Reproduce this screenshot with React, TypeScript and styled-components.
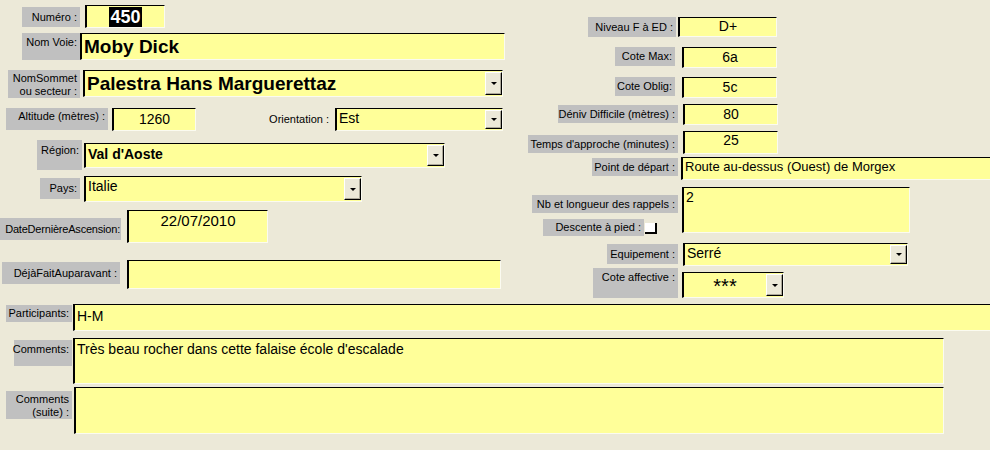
import React from 'react';
import styled, { createGlobalStyle } from 'styled-components';

const formBg = '#ece9d8';
const labelBg = '#c0c0c0';
const fieldBg = '#ffff99';

const GlobalStyle = createGlobalStyle`
  body {
    margin: 0;
    background-color: ${formBg};
    font-family: 'Liberation Sans', Arial, sans-serif;
  }
`;

const Form = styled.div`
  width: 990px;
  height: 450px;
  overflow: hidden;
  background-color: ${formBg};
  display: flex;
  flex-direction: column;
`;

const Top = styled.div`
  display: flex;
  height: 297px;
`;

const Column = styled.div<{ $w?: number }>`
  display: flex;
  flex-direction: column;
  width: ${p => (p.$w ? `${p.$w}px` : 'auto')};
  flex: ${p => (p.$w ? '0 0 auto' : '1')};
`;

const Bottom = styled.div`
  display: flex;
  flex-direction: column;
`;

const Row = styled.div<{ $mt?: number }>`
  display: flex;
  align-items: flex-start;
  margin-top: ${p => p.$mt ?? 0}px;
`;

const Stack = styled.div<{ $w: number }>`
  display: flex;
  flex-direction: column;
  width: ${p => p.$w}px;
  flex-shrink: 0;
`;

type BoxProps = { $w: number; $h: number; $ml?: number; $mt?: number };

const Label = styled.div<BoxProps & { $top?: boolean; $plain?: boolean; $pt?: number; $tight?: boolean }>`
  box-sizing: border-box;
  flex-shrink: 0;
  width: ${p => p.$w}px;
  height: ${p => p.$h}px;
  margin-left: ${p => p.$ml ?? 0}px;
  margin-top: ${p => p.$mt ?? 0}px;
  padding: ${p => p.$pt ?? 0}px ${p => (p.$tight ? 1 : 3)}px 0 ${p => (p.$tight ? 0 : 2)}px;
  background-color: ${p => (p.$plain ? 'transparent' : labelBg)};
  display: flex;
  justify-content: flex-end;
  align-items: ${p => (p.$top ? 'flex-start' : 'center')};
  text-align: right;
  font-size: 11px;
  letter-spacing: ${p => (p.$tight ? '-0.2px' : '0')};
  line-height: 13px;
  color: #000;
  white-space: nowrap;
`;

const Field = styled.div<BoxProps>`
  box-sizing: border-box;
  flex-shrink: 0;
  width: ${p => p.$w}px;
  height: ${p => p.$h}px;
  margin-left: ${p => p.$ml ?? 0}px;
  margin-top: ${p => p.$mt ?? 0}px;
  background-color: ${fieldBg};
  border-style: solid;
  border-width: 1px 1px 1px 2px;
  border-color: #000 #fbfbf0 #fbfbf0 #000;
  display: flex;
  overflow: hidden;
`;

const Value = styled.div<{ $size?: number; $bold?: boolean; $center?: boolean; $pt?: number }>`
  flex: 1;
  min-width: 0;
  padding: ${p => p.$pt ?? 1}px 2px 0 2px;
  font-size: ${p => p.$size ?? 14}px;
  font-weight: ${p => (p.$bold ? 700 : 400)};
  text-align: ${p => (p.$center ? 'center' : 'left')};
  line-height: 1.15;
  color: #000;
  white-space: nowrap;
  overflow: hidden;
`;

const Selected = styled.span`
  background-color: #000;
  color: #fff;
  padding: 0 1px;
`;

const DropButton = styled.div`
  box-sizing: border-box;
  width: 17px;
  flex-shrink: 0;
  margin: 1px 0 1px 0;
  background-color: ${formBg};
  border-style: solid;
  border-width: 1px;
  border-color: #fff #000 #000 #fff;
  box-shadow: inset -1px -1px 0 #aca899;
  display: flex;
  align-items: center;
  justify-content: center;

  &::after {
    content: '';
    border-left: 3px solid transparent;
    border-right: 3px solid transparent;
    border-top: 3px solid #000;
  }
`;

const CheckBox = styled.div<{ $ml: number; $mt: number }>`
  box-sizing: border-box;
  width: 12px;
  height: 11px;
  margin-left: ${p => p.$ml}px;
  margin-top: ${p => p.$mt}px;
  background-color: #fff;
  border-right: 2px solid #000;
  border-bottom: 2px solid #000;
  flex-shrink: 0;
`;

export default function App() {
  return (
    <>
      <GlobalStyle />
      <Form>
        <Top>
          <Column $w={520}>
            <Row $mt={5}>
              <Label $ml={22} $mt={2} $w={58} $h={20}>Numéro :</Label>
              <Field $ml={5} $w={80} $h={23}>
                <Value $size={18} $bold $center $pt={1}><Selected>450</Selected></Value>
              </Field>
            </Row>
            <Row $mt={5}>
              <Label $ml={22} $w={58} $h={27} $top $pt={3}>Nom Voie:</Label>
              <Field $w={425} $h={27}>
                <Value $size={19} $bold $pt={2}>Moby Dick</Value>
              </Field>
            </Row>
            <Row $mt={10}>
              <Label $ml={8} $w={72} $h={28} $pt={1}>NomSommet<br />ou secteur :</Label>
              <Field $ml={3} $w={420} $h={27}>
                <Value $size={19} $bold $pt={2}>Palestra Hans Marguerettaz</Value>
                <DropButton />
              </Field>
            </Row>
            <Row $mt={10}>
              <Label $ml={6} $w={102} $h={22} $top $pt={2}>Altitude (mètres) :</Label>
              <Field $ml={4} $w={84} $h={23}>
                <Value $center $pt={2}>1260</Value>
              </Field>
              <Label $ml={64} $w={72} $h={22} $plain>Orientation :</Label>
              <Field $ml={3} $w={168} $h={23}>
                <Value $pt={1}>Est</Value>
                <DropButton />
              </Field>
            </Row>
            <Row $mt={9}>
              <Label $ml={37} $w={45} $h={30} $top $pt={4}>Région:</Label>
              <Field $ml={2} $mt={3} $w={361} $h={25}>
                <Value $bold $pt={2}>Val d'Aoste</Value>
                <DropButton />
              </Field>
            </Row>
            <Row $mt={6}>
              <Label $ml={40} $mt={2} $w={40} $h={21}>Pays:</Label>
              <Field $ml={4} $w={278} $h={26}>
                <Value $pt={1}>Italie</Value>
                <DropButton />
              </Field>
            </Row>
            <Row $mt={8}>
              <Label $mt={8} $w={121} $h={22} $tight>DateDernièreAscension:</Label>
              <Field $ml={6} $w={141} $h={33}>
                <Value $center $size={15} $pt={1}>22/07/2010</Value>
              </Field>
            </Row>
            <Row $mt={17}>
              <Label $ml={2} $mt={2} $w={118} $h={22}>DéjàFaitAuparavant :</Label>
              <Field $ml={7} $w={374} $h={29}>
                <Value />
              </Field>
            </Row>
          </Column>

          <Column>
            <Row $mt={17}>
              <Label $ml={68} $w={88} $h={20}>Niveau F à ED :</Label>
              <Field $ml={2} $w={99} $h={20}>
                <Value $center $pt={0}>D+</Value>
              </Field>
            </Row>
            <Row $mt={10}>
              <Label $ml={95} $w={60} $h={19}>Cote Max:</Label>
              <Field $ml={7} $w={95} $h={21}>
                <Value $center $pt={1}>6a</Value>
              </Field>
            </Row>
            <Row $mt={9}>
              <Label $ml={95} $w={60} $h={19}>Cote Oblig:</Label>
              <Field $ml={7} $w={95} $h={21}>
                <Value $center $pt={1}>5c</Value>
              </Field>
            </Row>
            <Row $mt={6}>
              <Label $ml={38} $mt={1} $w={120} $h={18}>Déniv Difficile (mètres) :</Label>
              <Field $ml={5} $w={95} $h={21}>
                <Value $center $pt={1}>80</Value>
              </Field>
            </Row>
            <Row $mt={6}>
              <Label $ml={8} $mt={4} $w={150} $h={18}>Temps d'approche (minutes) :</Label>
              <Field $ml={5} $w={95} $h={23}>
                <Value $center $pt={0}>25</Value>
              </Field>
            </Row>
            <Row $mt={3}>
              <Label $ml={72} $mt={1} $w={86} $h={18}>Point de départ :</Label>
              <Field $ml={3} $w={320} $h={23}>
                <Value $size={13} $pt={2}>Route au-dessus (Ouest) de Morgex</Value>
              </Field>
            </Row>
            <Row $mt={7}>
              <Stack $w={162}>
                <Label $ml={12} $mt={8} $w={146} $h={18}>Nb et longueur des rappels :</Label>
                <Row $mt={6}>
                  <Label $ml={23} $w={101} $h={17}>Descente à pied :</Label>
                  <CheckBox $ml={1} $mt={4} />
                </Row>
              </Stack>
              <Field $ml={0} $w={228} $h={46}>
                <Value $pt={1}>2</Value>
              </Field>
            </Row>
            <Row $mt={7}>
              <Label $ml={87} $mt={1} $w={71} $h={20}>Equipement :</Label>
              <Field $ml={5} $w={225} $h={23}>
                <Value $pt={1}>Serré</Value>
                <DropButton />
              </Field>
            </Row>
            <Row $mt={2}>
              <Label $ml={73} $w={85} $h={30} $top $pt={3}>Cote affective :</Label>
              <Field $ml={4} $mt={4} $w={102} $h={26}>
                <Value $center $size={20} $pt={2}>***</Value>
                <DropButton />
              </Field>
            </Row>
          </Column>
        </Top>

        <Bottom>
          <Row $mt={7}>
            <Label $ml={6} $mt={1} $w={66} $h={17}>Participants:</Label>
            <Field $ml={1} $w={930} $h={27}>
              <Value $pt={3}>H-M</Value>
            </Field>
          </Row>
          <Row $mt={7}>
            <Label $ml={14} $mt={2} $w={58} $h={26} $top $pt={3}>Comments:</Label>
            <Field $ml={1} $w={871} $h={46}>
              <Value $pt={2}>Très beau rocher dans cette falaise école d'escalade</Value>
            </Field>
          </Row>
          <Row $mt={3}>
            <Label $ml={6} $mt={4} $w={66} $h={28} $pt={1}>Comments<br />(suite) :</Label>
            <Field $ml={2} $w={870} $h={47}>
              <Value />
            </Field>
          </Row>
        </Bottom>
      </Form>
    </>
  );
}
